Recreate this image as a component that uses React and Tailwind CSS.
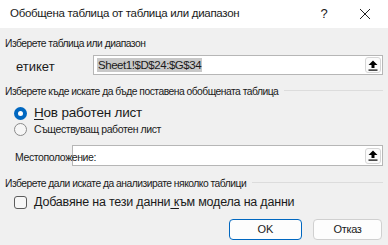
import React from "react";

const UploadIcon = () => (
  <svg width="10" height="11" viewBox="0 0 10 11">
    <path d="M5 0.5 L9.5 5 L6.5 5 L6.5 8 L3.5 8 L3.5 5 L0.5 5 Z" fill="#000" />
    <rect x="0.5" y="9.5" width="9" height="1.2" fill="#000" />
  </svg>
);

const RangeButton = () => (
  <div className="w-[16px] h-[16px] mr-[1px] flex items-center justify-center rounded-[3px] border border-[#d6d6d6] bg-[#fbfbfb]">
    <UploadIcon />
  </div>
);

// small condensed-looking group caption with an optional rule to the right
const GroupLabel = ({ children, line }) => (
  <div className="flex items-center h-[14px] pl-[5px] pr-[5px]">
    <span className="text-[10.3px] leading-[14px] text-[#1a1a1a] whitespace-nowrap tracking-[-0.5px] font-['Liberation_Sans',sans-serif]">
      {children}
    </span>
    {line && <div className="flex-1 ml-[6px] h-px bg-[#dcdcdc] -mt-[4px]" />}
  </div>
);

export default function App() {
  return (
    <div className="w-[388px] h-[245px] overflow-hidden bg-[#f0f0f0] font-['Liberation_Sans',sans-serif] text-[#1a1a1a]">
      {/* title bar */}
      <div className="h-[28px] bg-white flex items-center pl-[10px]">
        <span className="text-[11.5px] flex-1 whitespace-nowrap tracking-[-0.3px]">Обобщена таблица от таблица или диапазон</span>
        <span className="text-[13px] w-[12px] mr-[29px] text-center">?</span>
        <svg width="12" height="12" viewBox="0 0 12 12" className="mr-[17px]">
          <path d="M1 1 L11 11 M11 1 L1 11" stroke="#222" strokeWidth="1" />
        </svg>
      </div>

      <div className="flex flex-col pt-[9px]">
        <GroupLabel>Изберете таблица или диапазон</GroupLabel>

        <div className="flex items-center mt-[4px] h-[20px] pr-[5px]">
          <span className="w-[93px] pl-[16px] text-[13px] mt-[4px]">етикет</span>
          <div className="flex-1 h-[20px] bg-white border border-[#b6b6b6] flex items-center">
            <span className="ml-[3px] px-[1px] bg-[#c8c8c8] text-[11.5px] leading-[14px] tracking-[-0.45px]">
              Sheet1!$D$24:$G$34
            </span>
            <div className="flex-1" />
            <RangeButton />
          </div>
        </div>

        <div className="mt-[10px]">
          <GroupLabel line>Изберете къде искате да бъде поставена обобщената таблица</GroupLabel>
        </div>

        <div className="flex items-center h-[16px] mt-[6px] pl-[14px]">
          <div className="w-[13px] h-[13px] rounded-full bg-[#0067c0] flex items-center justify-center">
            <div className="w-[5px] h-[5px] rounded-full bg-white" />
          </div>
          <span className="ml-[7px] text-[13.5px] leading-[16px] tracking-[-0.2px]">
            <span className="underline underline-offset-2">Н</span>ов работен лист
          </span>
        </div>

        <div className="flex items-center h-[16px] pl-[14px]">
          <div className="w-[13px] h-[13px] rounded-full border border-[#8a8a8a] bg-[#f6f6f6]" />
          <span className="ml-[7px] text-[10.5px] leading-[14px] tracking-[-0.4px]">
            Съществуващ работен лист
          </span>
        </div>

        <div className="flex items-end h-[21px] mt-[8px] pr-[5px]">
          <span className="relative z-10 w-[72px] pl-[15px] text-[10.5px] leading-[14px] tracking-[-0.4px] mb-[2px] whitespace-nowrap">
            Местоположение:
          </span>
          <div className="flex-1 h-[21px] bg-white border border-[#b6b6b6] flex items-center justify-end">
            <RangeButton />
          </div>
        </div>

        <div className="mt-[11px]">
          <GroupLabel line>Изберете дали искате да анализирате няколко таблици</GroupLabel>
        </div>

        <div className="flex items-center h-[16px] mt-[3px] pl-[14px]">
          <div className="w-[13px] h-[13px] rounded-[3px] border border-[#5c5c5c] bg-[#f7f7f7]" />
          <span className="ml-[7px] text-[12.5px] leading-[16px] whitespace-nowrap tracking-[-0.2px]">
            Добавяне на тези данни<span className="underline underline-offset-2"> к</span>ъм модела на данни
          </span>
        </div>

        <div className="flex justify-end mt-[9px] pr-[6px] gap-[11px]">
          <button className="w-[73px] h-[21px] rounded-[4px] border border-[#0067c0] bg-[#fdfdfd] text-[11px]">
            OK
          </button>
          <button className="w-[69px] h-[21px] rounded-[4px] border border-[#d0d0d0] bg-[#fdfdfd] text-[11px] tracking-[-0.3px]">
            Отказ
          </button>
        </div>
      </div>
    </div>
  );
}
